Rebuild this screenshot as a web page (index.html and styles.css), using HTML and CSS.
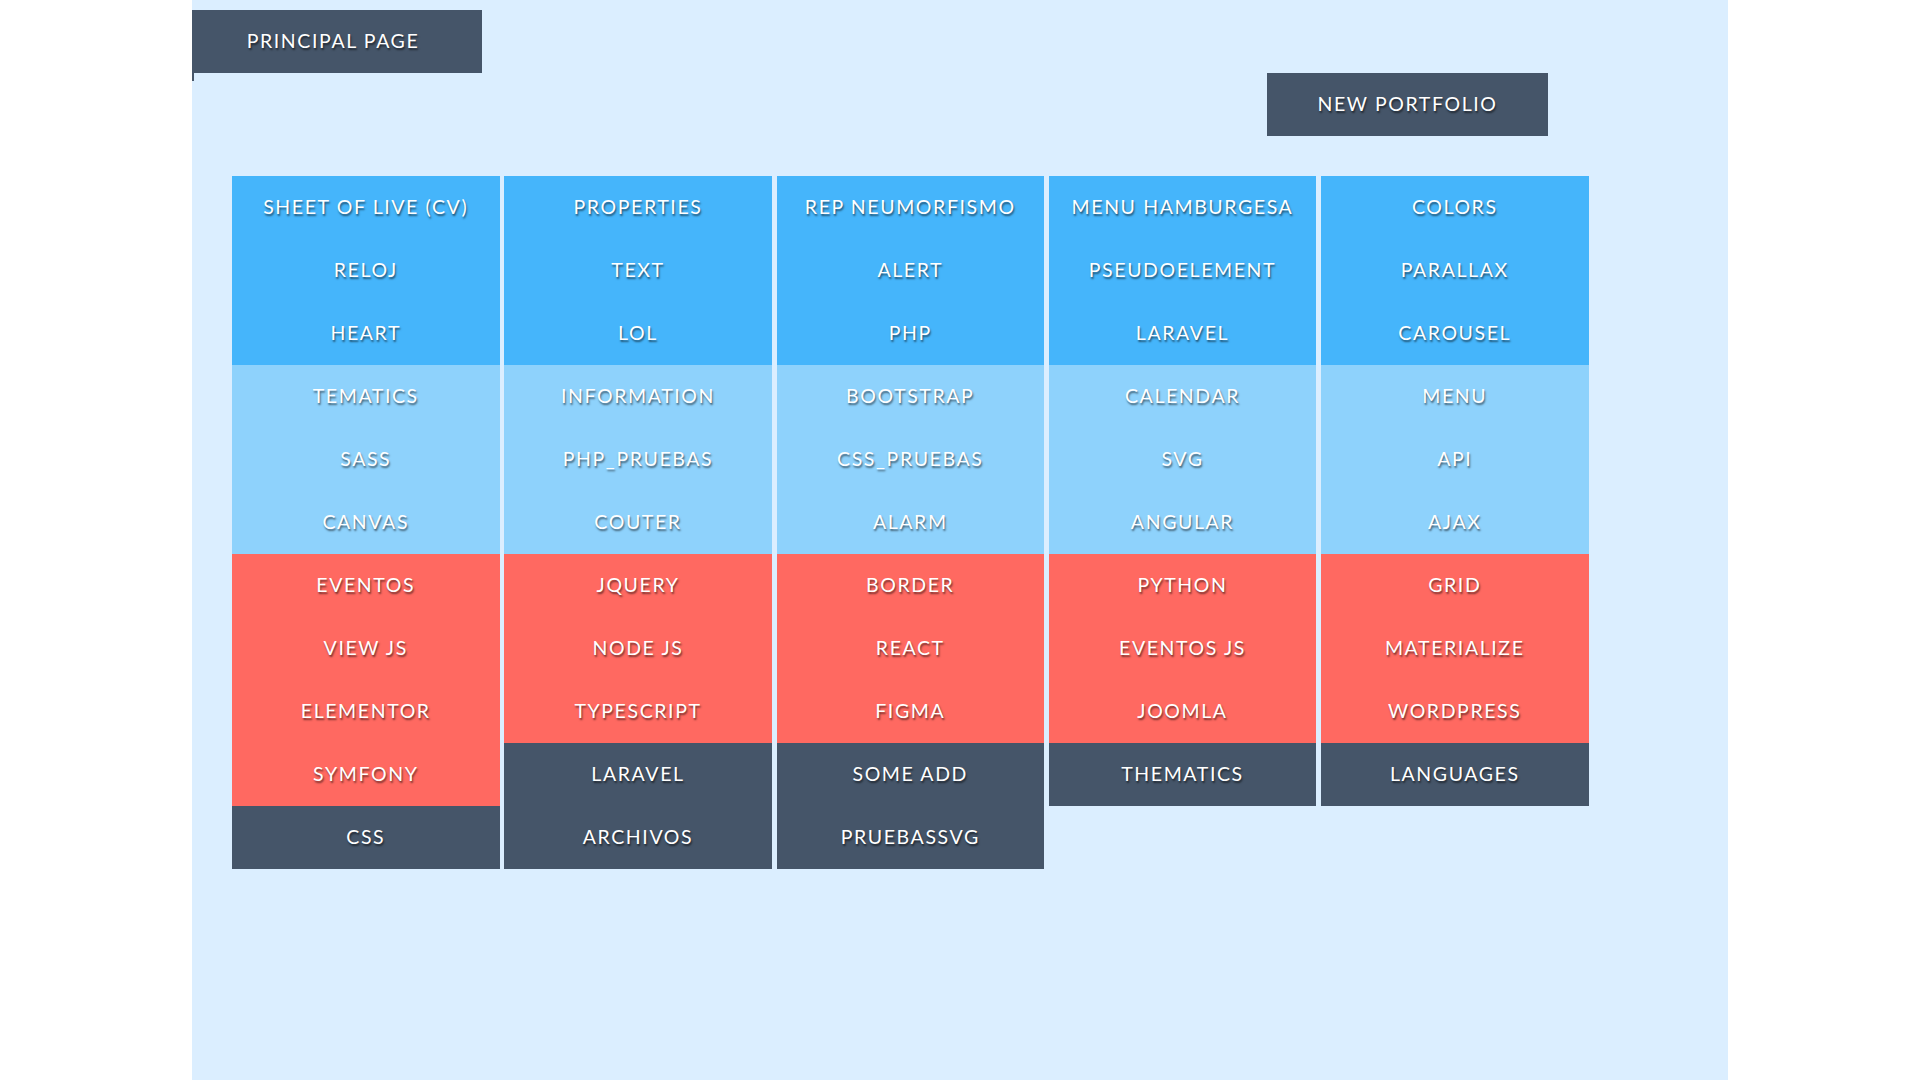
FILE: index.html
```html
<!DOCTYPE html>
<html lang="en">
<head>
<meta charset="utf-8">
<title>Portfolio</title>
<link rel="stylesheet" href="styles.css">
</head>
<body>
<div class="page">
  <header class="top">
    <div class="top-left">
      <a class="btn btn-principal" href="#">Principal page</a>
    </div>
    <div class="top-right">
      <a class="btn btn-portfolio" href="#">New portfolio</a>
    </div>
  </header>
  <main class="grid">
    <div class="col">
      <a class="cell c-blue" href="#">Sheet of live (CV)</a>
      <a class="cell c-blue" href="#">Reloj</a>
      <a class="cell c-blue" href="#">Heart</a>
      <a class="cell c-light" href="#">Tematics</a>
      <a class="cell c-light" href="#">Sass</a>
      <a class="cell c-light" href="#">Canvas</a>
      <a class="cell c-red" href="#">Eventos</a>
      <a class="cell c-red" href="#">View JS</a>
      <a class="cell c-red" href="#">Elementor</a>
      <a class="cell c-red" href="#">Symfony</a>
      <a class="cell c-dark" href="#">CSS</a>
    </div>
    <div class="col">
      <a class="cell c-blue" href="#">Properties</a>
      <a class="cell c-blue" href="#">Text</a>
      <a class="cell c-blue" href="#">Lol</a>
      <a class="cell c-light" href="#">Information</a>
      <a class="cell c-light" href="#">PHP_pruebas</a>
      <a class="cell c-light" href="#">Couter</a>
      <a class="cell c-red" href="#">Jquery</a>
      <a class="cell c-red" href="#">Node JS</a>
      <a class="cell c-red" href="#">Typescript</a>
      <a class="cell c-dark" href="#">Laravel</a>
      <a class="cell c-dark" href="#">Archivos</a>
    </div>
    <div class="col">
      <a class="cell c-blue" href="#">Rep neumorfismo</a>
      <a class="cell c-blue" href="#">Alert</a>
      <a class="cell c-blue" href="#">PHP</a>
      <a class="cell c-light" href="#">Bootstrap</a>
      <a class="cell c-light" href="#">CSS_pruebas</a>
      <a class="cell c-light" href="#">Alarm</a>
      <a class="cell c-red" href="#">Border</a>
      <a class="cell c-red" href="#">React</a>
      <a class="cell c-red" href="#">Figma</a>
      <a class="cell c-dark" href="#">Some add</a>
      <a class="cell c-dark" href="#">Pruebassvg</a>
    </div>
    <div class="col">
      <a class="cell c-blue" href="#">Menu hamburgesa</a>
      <a class="cell c-blue" href="#">Pseudoelement</a>
      <a class="cell c-blue" href="#">Laravel</a>
      <a class="cell c-light" href="#">Calendar</a>
      <a class="cell c-light" href="#">SVG</a>
      <a class="cell c-light" href="#">Angular</a>
      <a class="cell c-red" href="#">Python</a>
      <a class="cell c-red" href="#">Eventos JS</a>
      <a class="cell c-red" href="#">Joomla</a>
      <a class="cell c-dark" href="#">Thematics</a>
    </div>
    <div class="col">
      <a class="cell c-blue" href="#">Colors</a>
      <a class="cell c-blue" href="#">Parallax</a>
      <a class="cell c-blue" href="#">Carousel</a>
      <a class="cell c-light" href="#">Menu</a>
      <a class="cell c-light" href="#">API</a>
      <a class="cell c-light" href="#">Ajax</a>
      <a class="cell c-red" href="#">Grid</a>
      <a class="cell c-red" href="#">Materialize</a>
      <a class="cell c-red" href="#">Wordpress</a>
      <a class="cell c-dark" href="#">Languages</a>
    </div>
  </main>
</div>
</body>
</html>
```

FILE: styles.css
```css
html, body {
  margin: 0;
  padding: 0;
  background: #ffffff;
}

body {
  font-family: "Lato", "Open Sans", sans-serif;
}

.page {
  width: 80%;
  margin: 0 auto;
  min-height: 100vh;
  background: #dbeeff;
  box-sizing: border-box;
  padding-top: 10px;
}

.top {
  display: flex;
  flex-direction: column;
}

.top-left {
  display: flex;
  border-left: 2px solid #455569;
  height: 71px;
  box-sizing: border-box;
  width: 290px;
}

.top-right {
  display: flex;
  justify-content: flex-end;
  padding-right: 180px;
  margin-top: -8px;
}

.btn,
.cell {
  display: flex;
  align-items: center;
  justify-content: center;
  color: #ffffff;
  text-decoration: none;
  text-transform: uppercase;
  font-size: 19.5px;
  letter-spacing: 1.6px;
  text-shadow: 1px 2px 2px rgba(0, 0, 0, 0.55);
  box-sizing: border-box;
  padding-bottom: 2px;
}

.btn {
  background: #455569;
  height: 63px;
}

.btn-principal {
  width: 290px;
  margin-left: -2px;
  padding-right: 8px;
}

.btn-portfolio {
  width: 281px;
}

.grid {
  display: flex;
  align-items: flex-start;
  gap: 4.75px;
  margin-top: 40px;
  padding-left: 40px;
}

.col {
  display: flex;
  flex-direction: column;
  width: 267.5px;
}

.cell {
  height: 63px;
}

.c-blue { background: #45b5fb; }
.c-light { background: #8ed2fc; }
.c-red { background: #ff6961; }
.c-dark { background: #455569; }
```
